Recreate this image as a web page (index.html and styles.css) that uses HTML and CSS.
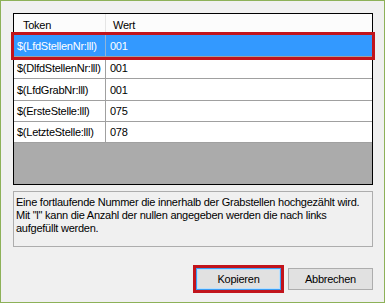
FILE: index.html
```html
<!DOCTYPE html>
<html>
<head>
<meta charset="utf-8">
<link rel="stylesheet" href="styles.css">
</head>
<body>
<div class="window">
  <div class="grid">
    <div class="row head">
      <div class="c1">Token</div>
      <div class="c2">Wert</div>
    </div>
    <div class="row sel">
      <div class="c1">$(LfdStellenNr:lll)</div>
      <div class="c2">001</div>
    </div>
    <div class="row">
      <div class="c1">$(DlfdStellenNr:lll)</div>
      <div class="c2">001</div>
    </div>
    <div class="row">
      <div class="c1">$(LfdGrabNr:lll)</div>
      <div class="c2">001</div>
    </div>
    <div class="row short">
      <div class="c1">$(ErsteStelle:lll)</div>
      <div class="c2">075</div>
    </div>
    <div class="row short">
      <div class="c1">$(LetzteStelle:lll)</div>
      <div class="c2">078</div>
    </div>
    <div class="empty"></div>
  </div>
  <div class="desc">Eine fortlaufende Nummer die innerhalb der Grabstellen hochgezählt wird. Mit "l" kann die Anzahl der nullen angegeben werden die nach links aufgefüllt werden.</div>
  <div class="buttons">
    <button class="btn primary">Kopieren</button>
    <button class="btn">Abbrechen</button>
  </div>
</div>
</body>
</html>
```

FILE: styles.css
```css
html, body {
  margin: 0;
  padding: 0;
  background: #ffffff;
}
body {
  font-family: "Liberation Sans", Arial, sans-serif;
  font-size: 11px;
  letter-spacing: -0.25px;
  color: #000;
}
.window {
  box-sizing: border-box;
  width: 385px;
  height: 303px;
  border: 1px solid #8db158;
  background: #f0f0f0;
  padding: 12px 12px 0 12px;
  display: flex;
  flex-direction: column;
}
.grid {
  box-sizing: border-box;
  width: 360px;
  height: 172px;
  border: 1px solid #000;
  background: #ababab;
  display: flex;
  flex-direction: column;
}
.row {
  display: flex;
  height: 22px;
  background: #fff;
  border-bottom: 1px solid #a0a0a0;
  box-sizing: border-box;
  flex: none;
}
.row.short {
  height: 21px;
}
.row.head {
  height: 21px;
  background: #fcfcfc;
  border-bottom: none;
}
.row.head .c1 {
  padding-left: 9px;
  border-right: 1px solid #e5e5e5;
}
.row.head .c2 {
  padding-left: 7px;
}
.c1, .c2 {
  display: flex;
  align-items: center;
  box-sizing: border-box;
  white-space: nowrap;
  overflow: hidden;
}
.c1 {
  width: 92px;
  padding-left: 3px;
  border-right: 1px solid #a0a0a0;
}
.c2 {
  flex: 1;
  padding-left: 4px;
}
.row.sel {
  background: #3399ff;
  color: #fff;
  outline: 3px solid #c1141c;
  position: relative;
  z-index: 1;
  height: 22px;
}
.row.sel .c1 {
  border-right-color: #8fb4d9;
}
.empty {
  flex: 1;
}
.desc {
  box-sizing: border-box;
  margin-top: 6px;
  width: 360px;
  height: 56px;
  border: 1px solid #adadad;
  background: #f0f0f0;
  padding: 4px 2px 0 2px;
  line-height: 13px;
}
.buttons {
  display: flex;
  justify-content: flex-end;
  gap: 7px;
  margin-top: 21px;
  width: 360px;
}
.btn {
  box-sizing: border-box;
  width: 85px;
  height: 22px;
  margin: 0;
  padding: 0;
  font-family: "Liberation Sans", Arial, sans-serif;
  font-size: 11px;
  letter-spacing: -0.25px;
  color: #000;
  border: 1px solid #adadad;
  background: #e1e1e1;
}
.btn.primary {
  border-color: #3c9ff5;
  outline: 3px solid #c1141c;
  background: #e1e1e1;
  box-shadow: inset 0 0 0 1px #bde0fb;
}
```
